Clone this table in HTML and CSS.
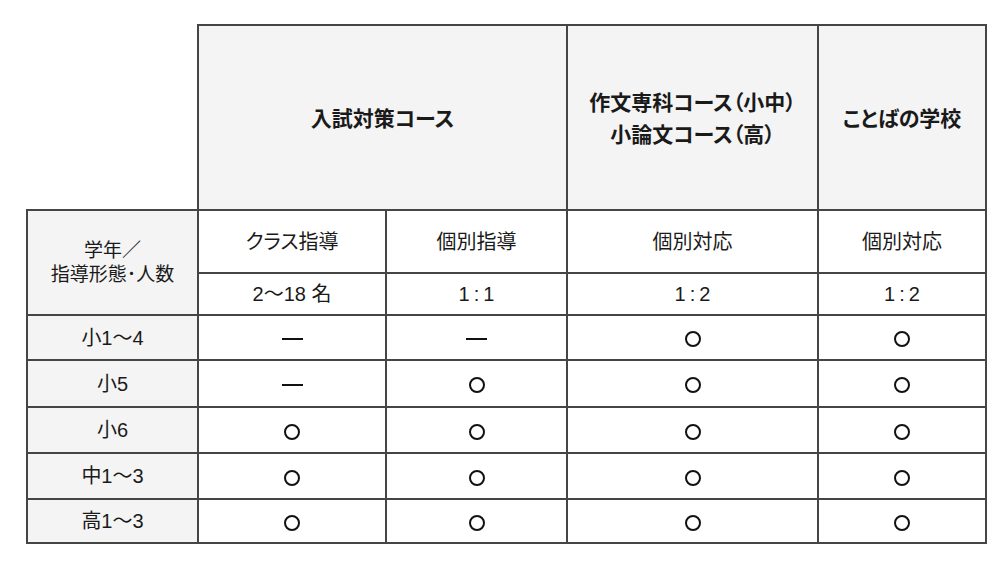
FILE: index.html
```html
<!DOCTYPE html>
<html lang="ja">
<head>
<meta charset="utf-8">
<link rel="stylesheet" href="styles.css">
</head>
<body>
<table class="plan">
  <colgroup>
    <col class="c1"><col class="c2"><col class="c3"><col class="c4"><col class="c5">
  </colgroup>
  <tr class="r-head">
    <td class="blank"></td>
    <th colspan="2" class="course">入試対策コース</th>
    <th class="course">作文専科コース（小中）<br>小論文コース（高）</th>
    <th class="course">ことばの学校</th>
  </tr>
  <tr class="r-type">
    <th rowspan="2" class="side side-label">学年／<br>指導形態･人数</th>
    <td>クラス指導</td>
    <td>個別指導</td>
    <td>個別対応</td>
    <td>個別対応</td>
  </tr>
  <tr class="r-num">
    <td>2〜18 名</td>
    <td class="ratio">1:1</td>
    <td class="ratio">1:2</td>
    <td class="ratio">1:2</td>
  </tr>
  <tr class="r-a">
    <th class="side">小1〜4</th>
    <td><span class="dash"></span></td>
    <td><span class="dash"></span></td>
    <td><span class="ok"></span></td>
    <td><span class="ok"></span></td>
  </tr>
  <tr class="r-b">
    <th class="side">小5</th>
    <td><span class="dash"></span></td>
    <td><span class="ok"></span></td>
    <td><span class="ok"></span></td>
    <td><span class="ok"></span></td>
  </tr>
  <tr class="r-c">
    <th class="side">小6</th>
    <td><span class="ok"></span></td>
    <td><span class="ok"></span></td>
    <td><span class="ok"></span></td>
    <td><span class="ok"></span></td>
  </tr>
  <tr class="r-d">
    <th class="side">中1〜3</th>
    <td><span class="ok"></span></td>
    <td><span class="ok"></span></td>
    <td><span class="ok"></span></td>
    <td><span class="ok"></span></td>
  </tr>
  <tr class="r-e">
    <th class="side">高1〜3</th>
    <td><span class="ok"></span></td>
    <td><span class="ok"></span></td>
    <td><span class="ok"></span></td>
    <td><span class="ok"></span></td>
  </tr>
</table>
</body>
</html>
```

FILE: styles.css
```css
html, body {
  margin: 0;
  padding: 0;
  background: #ffffff;
}

body {
  font-family: "Liberation Sans", "Noto Sans CJK JP", sans-serif;
  font-feature-settings: "palt";
  color: #1a1a1a;
}

.plan {
  margin: 24px 0 0 26px;
  border-collapse: collapse;
  table-layout: fixed;
  width: 961px;
}

.c1 { width: 171px; }
.c2 { width: 188px; }
.c3 { width: 181px; }
.c4 { width: 251px; }
.c5 { width: 168px; }

.plan th,
.plan td {
  border: 2px solid #454545;
  padding: 0;
  text-align: center;
  vertical-align: middle;
  font-size: 20px;
  font-weight: 400;
  line-height: 24px;
}

.plan .blank {
  border: none;
  background: #ffffff;
}

.plan .course {
  background: #f4f4f4;
  font-size: 21px;
  font-weight: 700;
  line-height: 32px;
  padding-top: 2px;
}

.plan .side {
  background: #f4f4f4;
}

.plan .side-label {
  font-size: 19px;
  line-height: 24px;
}

.plan .ratio {
  letter-spacing: 4px;
  text-indent: 4px;
}

.r-head { height: 185px; }
.r-type { height: 63px; }
.r-num { height: 42px; }
.r-a { height: 45px; }
.r-b { height: 47px; }
.r-c { height: 46px; }
.r-d { height: 46px; }
.r-e { height: 44px; }

.ok {
  display: inline-block;
  width: 12px;
  height: 12px;
  border: 2px solid #111;
  border-radius: 50%;
  vertical-align: middle;
}

.dash {
  display: inline-block;
  width: 21px;
  height: 2px;
  background: #111;
  vertical-align: middle;
}
```
